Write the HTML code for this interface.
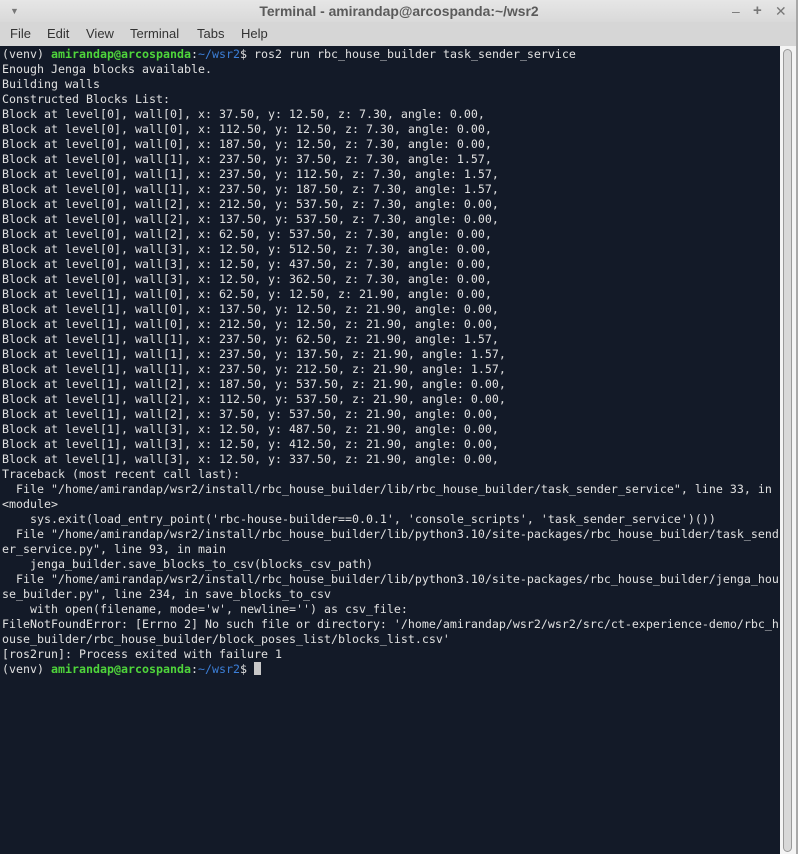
<!DOCTYPE html>
<html><head><style>
body{margin:0;width:798px;height:854px;overflow:hidden;background:#d6d6d6;font-family:"Liberation Sans","DejaVu Sans",sans-serif;position:relative}
.title{position:absolute;left:0;top:0;width:798px;height:22px;background:linear-gradient(#e6e6e6,#d9d9d9);text-align:center;font-size:13.9px;font-weight:bold;color:#5a5a5a;line-height:22px}
.menu{position:absolute;left:0;top:22px;width:798px;height:24px;background:#d6d6d6;font-size:13px;color:#333;line-height:22px}
.menu span{position:absolute;top:1px}
.term{position:absolute;left:0;top:46px;width:780px;height:808px;background:#131a28}
pre{margin:0;padding:1px 0 0 2px;font-family:"DejaVu Sans Mono","Liberation Mono",monospace;font-size:11.63px;line-height:15px;color:#e0e0e0}
.g{color:#4fd53b;font-weight:bold}.b{color:#3c7fd8}
.cur{display:inline-block;width:7px;height:13px;background:#c8c8c8;vertical-align:-2px}
.sb{position:absolute;left:780px;top:46px;width:16px;height:808px;background:#f4f4f4}
.th{position:absolute;left:783px;top:49px;width:9px;height:803px;background:#d8d8d8;border:1px solid #9a9a9a;border-radius:5px;box-sizing:border-box}
.rb{position:absolute;left:796px;top:0;width:2px;height:854px;background:#a8a8a8}
</style></head><body>
<div class="title"><span style="position:absolute;left:10px;top:0;font-size:9px;color:#777">▼</span>Terminal - amirandap@arcospanda:~/wsr2<span style="position:absolute;left:732px;color:#777;font-weight:normal">–</span><span style="position:absolute;left:753px;color:#777;font-size:15px">+</span><span style="position:absolute;left:775px;color:#777;font-weight:normal">✕</span></div>
<div class="menu"><span style="left:10px">File</span><span style="left:47px">Edit</span><span style="left:86px">View</span><span style="left:130px">Terminal</span><span style="left:197px">Tabs</span><span style="left:241px">Help</span></div>
<div class="term"><pre>(venv) <span class="g">amirandap@arcospanda</span>:<span class="b">~/wsr2</span>$ ros2 run rbc_house_builder task_sender_service
Enough Jenga blocks available.
Building walls
Constructed Blocks List:
Block at level[0], wall[0], x: 37.50, y: 12.50, z: 7.30, angle: 0.00,
Block at level[0], wall[0], x: 112.50, y: 12.50, z: 7.30, angle: 0.00,
Block at level[0], wall[0], x: 187.50, y: 12.50, z: 7.30, angle: 0.00,
Block at level[0], wall[1], x: 237.50, y: 37.50, z: 7.30, angle: 1.57,
Block at level[0], wall[1], x: 237.50, y: 112.50, z: 7.30, angle: 1.57,
Block at level[0], wall[1], x: 237.50, y: 187.50, z: 7.30, angle: 1.57,
Block at level[0], wall[2], x: 212.50, y: 537.50, z: 7.30, angle: 0.00,
Block at level[0], wall[2], x: 137.50, y: 537.50, z: 7.30, angle: 0.00,
Block at level[0], wall[2], x: 62.50, y: 537.50, z: 7.30, angle: 0.00,
Block at level[0], wall[3], x: 12.50, y: 512.50, z: 7.30, angle: 0.00,
Block at level[0], wall[3], x: 12.50, y: 437.50, z: 7.30, angle: 0.00,
Block at level[0], wall[3], x: 12.50, y: 362.50, z: 7.30, angle: 0.00,
Block at level[1], wall[0], x: 62.50, y: 12.50, z: 21.90, angle: 0.00,
Block at level[1], wall[0], x: 137.50, y: 12.50, z: 21.90, angle: 0.00,
Block at level[1], wall[0], x: 212.50, y: 12.50, z: 21.90, angle: 0.00,
Block at level[1], wall[1], x: 237.50, y: 62.50, z: 21.90, angle: 1.57,
Block at level[1], wall[1], x: 237.50, y: 137.50, z: 21.90, angle: 1.57,
Block at level[1], wall[1], x: 237.50, y: 212.50, z: 21.90, angle: 1.57,
Block at level[1], wall[2], x: 187.50, y: 537.50, z: 21.90, angle: 0.00,
Block at level[1], wall[2], x: 112.50, y: 537.50, z: 21.90, angle: 0.00,
Block at level[1], wall[2], x: 37.50, y: 537.50, z: 21.90, angle: 0.00,
Block at level[1], wall[3], x: 12.50, y: 487.50, z: 21.90, angle: 0.00,
Block at level[1], wall[3], x: 12.50, y: 412.50, z: 21.90, angle: 0.00,
Block at level[1], wall[3], x: 12.50, y: 337.50, z: 21.90, angle: 0.00,
Traceback (most recent call last):
  File "/home/amirandap/wsr2/install/rbc_house_builder/lib/rbc_house_builder/task_sender_service", line 33, in
&lt;module&gt;
    sys.exit(load_entry_point('rbc-house-builder==0.0.1', 'console_scripts', 'task_sender_service')())
  File "/home/amirandap/wsr2/install/rbc_house_builder/lib/python3.10/site-packages/rbc_house_builder/task_send
er_service.py", line 93, in main
    jenga_builder.save_blocks_to_csv(blocks_csv_path)
  File "/home/amirandap/wsr2/install/rbc_house_builder/lib/python3.10/site-packages/rbc_house_builder/jenga_hou
se_builder.py", line 234, in save_blocks_to_csv
    with open(filename, mode='w', newline='') as csv_file:
FileNotFoundError: [Errno 2] No such file or directory: '/home/amirandap/wsr2/wsr2/src/ct-experience-demo/rbc_h
ouse_builder/rbc_house_builder/block_poses_list/blocks_list.csv'
[ros2run]: Process exited with failure 1
(venv) <span class="g">amirandap@arcospanda</span>:<span class="b">~/wsr2</span>$ <span class="cur"></span></pre></div>
<div class="sb"></div><div class="th"></div><div class="rb"></div>
</body></html>
